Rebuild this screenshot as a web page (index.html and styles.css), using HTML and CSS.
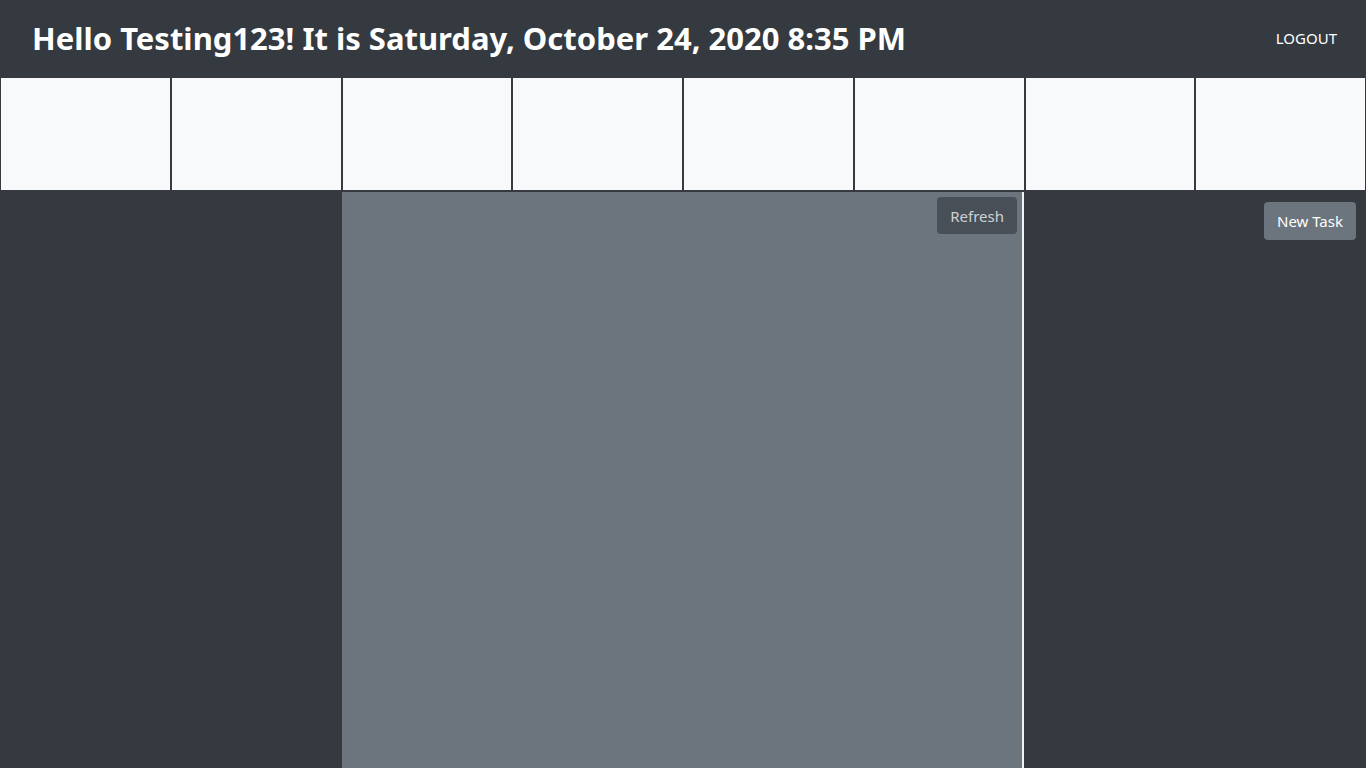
FILE: index.html
```html
<!DOCTYPE html>
<html lang="en">
<head>
<meta charset="utf-8">
<title>Tasks</title>
<link rel="stylesheet" href="styles.css">
</head>
<body>
<header class="topbar">
  <h1 class="greeting">Hello Testing123! It is Saturday, October 24, 2020 8:35 PM</h1>
  <a class="logout" href="#">LOGOUT</a>
</header>
<div class="days">
  <div class="day"></div>
  <div class="day"></div>
  <div class="day"></div>
  <div class="day"></div>
  <div class="day"></div>
  <div class="day"></div>
  <div class="day"></div>
  <div class="day"></div>
</div>
<main class="board">
  <section class="side side-left"></section>
  <section class="center">
    <button class="btn btn-refresh" type="button">Refresh</button>
  </section>
  <section class="side side-right">
    <button class="btn btn-new" type="button">New Task</button>
  </section>
</main>
</body>
</html>
```
FILE: styles.css
```css
html, body {
  margin: 0;
  padding: 0;
  height: 100%;
}
body {
  background: #343a40;
  font-family: "Noto Sans", "Open Sans", sans-serif;
  color: #fff;
  overflow: hidden;
  display: flex;
  flex-direction: column;
}
.topbar {
  height: 78px;
  flex: none;
  display: flex;
  align-items: center;
  justify-content: space-between;
  padding: 0 29px 0 32px;
  box-sizing: border-box;
}
.greeting {
  margin: 0;
  font-size: 31px;
  font-weight: 700;
  line-height: 1;
  letter-spacing: 0;
  padding-bottom: 2px;
}
.logout {
  color: #fff;
  text-decoration: none;
  font-size: 15px;
  padding-bottom: 2px;
}
.days {
  flex: none;
  display: flex;
  gap: 2px;
  padding: 0 1px 2px 1px;
  height: 114px;
  box-sizing: border-box;
}
.day {
  flex: 1;
  background: #f8f9fa;
}
.board {
  flex: 1;
  display: flex;
}
.side {
  width: 342px;
  flex: none;
  display: flex;
  justify-content: flex-end;
  align-items: flex-start;
}
.center {
  flex: 1;
  background: #6c757d;
  border-right: 2px solid #f1f2f3;
  display: flex;
  justify-content: flex-end;
  align-items: flex-start;
  padding: 5px 5px 0 0;
}
.side-right {
  padding: 10px 10px 0 0;
  box-sizing: border-box;
}
.btn {
  font-family: inherit;
  font-size: 15px;
  line-height: 24px;
  border: none;
  border-radius: 4px;
  cursor: pointer;
}
.btn-refresh {
  background: #484f56;
  color: #ced2d6;
  height: 37px;
  padding: 0 13px;
}
.btn-new {
  background: #6c757d;
  color: #fff;
  height: 38px;
  padding: 0 13px;
}
```
